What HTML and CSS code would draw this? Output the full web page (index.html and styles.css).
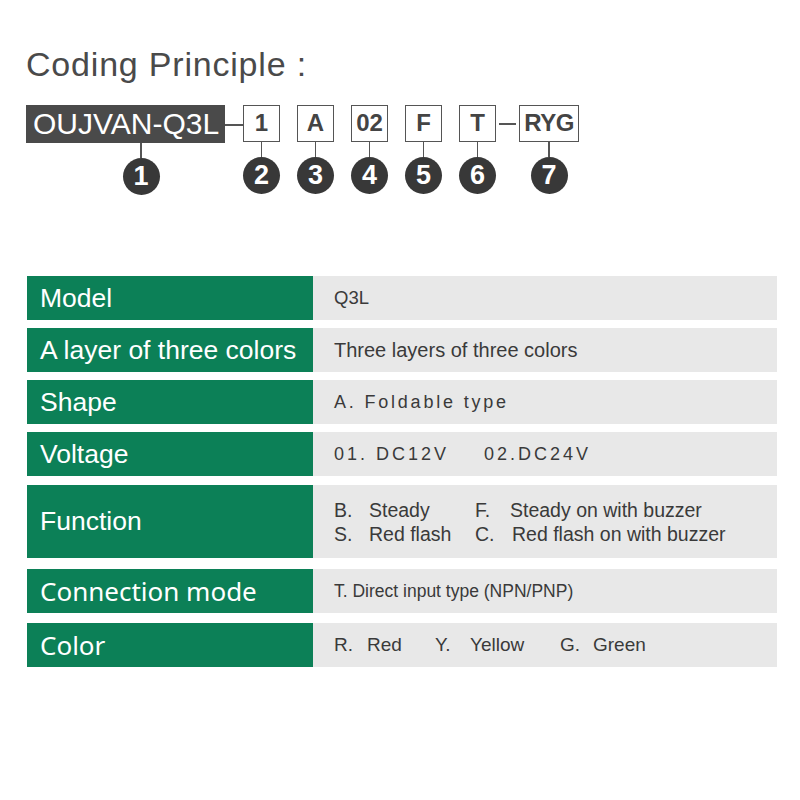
FILE: index.html
```html
<!DOCTYPE html>
<html>
<head>
<meta charset="utf-8">
<link rel="stylesheet" href="styles.css">
</head>
<body>
<div class="page">
  <h1 class="title">Coding Principle :</h1>

  <div class="code">
    <div class="seg seg-main">
      <div class="mainbox">OUJVAN-Q3L</div>
      <div class="mark mark-shift"><div class="stem"></div><div class="num">1</div></div>
    </div>
    <div class="link"></div>
    <div class="seg">
      <div class="box">1</div>
      <div class="mark"><div class="stem"></div><div class="num">2</div></div>
    </div>
    <div class="seg gap">
      <div class="box">A</div>
      <div class="mark"><div class="stem"></div><div class="num">3</div></div>
    </div>
    <div class="seg gap">
      <div class="box">02</div>
      <div class="mark"><div class="stem"></div><div class="num">4</div></div>
    </div>
    <div class="seg gap">
      <div class="box">F</div>
      <div class="mark"><div class="stem"></div><div class="num">5</div></div>
    </div>
    <div class="seg gap">
      <div class="box">T</div>
      <div class="mark"><div class="stem"></div><div class="num">6</div></div>
    </div>
    <div class="dash"></div>
    <div class="seg">
      <div class="box box-wide">RYG</div>
      <div class="mark"><div class="stem"></div><div class="num">7</div></div>
    </div>
  </div>

  <div class="table">
    <div class="row">
      <div class="label">Model</div>
      <div class="value">Q3L</div>
    </div>
    <div class="row">
      <div class="label">A layer of three colors</div>
      <div class="value v-wide">Three layers of three colors</div>
    </div>
    <div class="row">
      <div class="label">Shape</div>
      <div class="value spaced">A. Foldable type</div>
    </div>
    <div class="row">
      <div class="label">Voltage</div>
      <div class="value spaced volt-row"><span class="volt">01. DC12V</span><span>02.DC24V</span></div>
    </div>
    <div class="row row-tall">
      <div class="label">Function</div>
      <div class="value">
        <div class="fn-grid">
          <div><span class="key">B.</span>Steady</div>
          <div><span class="key">F.</span>Steady on with buzzer</div>
          <div><span class="key">S.</span>Red flash</div>
          <div><span class="key key-c">C.</span>Red flash on with buzzer</div>
        </div>
      </div>
    </div>
    <div class="row row-after-tall">
      <div class="label label-noto">Connection mode</div>
      <div class="value small">T. Direct input type (NPN/PNP)</div>
    </div>
    <div class="row row-last">
      <div class="label label-noto">Color</div>
      <div class="value">
        <span class="color-item c1"><span class="ckey">R.</span>Red</span>
        <span class="color-item c2"><span class="ckey">Y.</span>Yellow</span>
        <span class="color-item"><span class="ckey">G.</span>Green</span>
      </div>
    </div>
  </div>
</div>
</body>
</html>
```

FILE: styles.css
```css
* { box-sizing: border-box; }
html, body { margin: 0; padding: 0; background: #ffffff; }
body { font-family: "Liberation Sans", Arial, sans-serif; }

.page { width: 800px; height: 800px; padding: 44px 0 0 26px; }

.title {
  margin: 0;
  font-weight: normal;
  font-size: 34px;
  line-height: 40px;
  letter-spacing: 0.8px;
  color: #4a4a4a;
}

/* coding diagram */
.code {
  display: flex;
  align-items: flex-start;
  margin-top: 21px;
}
.seg {
  display: flex;
  flex-direction: column;
  align-items: center;
}
.seg.gap { margin-left: 17px; }
.mainbox {
  width: 199px;
  height: 38px;
  background: #4a4a4a;
  color: #ffffff;
  font-size: 30px;
  line-height: 38px;
  padding-left: 7px;
  white-space: nowrap;
}
.box {
  width: 37px;
  height: 37px;
  border: 1.5px solid #555555;
  color: #444444;
  font-weight: bold;
  font-size: 24px;
  line-height: 34px;
  text-align: center;
}
.box-wide { width: 60px; letter-spacing: -0.5px; }
.link {
  width: 18px;
  height: 1.5px;
  background: #555555;
  margin-top: 19px;
}
.dash {
  width: 17px;
  height: 1.5px;
  background: #555555;
  margin: 18px 3px 0 3px;
}
.mark {
  display: flex;
  flex-direction: column;
  align-items: center;
}
.mark-shift { margin-left: 31px; }
.stem {
  width: 1.5px;
  height: 15px;
  background: #555555;
}
.num {
  width: 37px;
  height: 37px;
  border-radius: 50%;
  background: #383838;
  color: #ffffff;
  font-weight: bold;
  font-size: 27px;
  line-height: 37px;
  text-align: center;
}

/* table */
.table {
  width: 750px;
  margin: 81px 0 0 1px;
  display: flex;
  flex-direction: column;
  gap: 8px;
}
.row {
  display: flex;
  height: 44px;
}
.row-tall { height: 73px; margin-top: 1px; }
.row-after-tall { margin-top: 3px; }
.row-last { margin-top: 2px; }
.label {
  width: 286px;
  flex: none;
  background: #0c8057;
  color: #ffffff;
  font-size: 26.5px;
  padding-left: 13px;
  display: flex;
  align-items: center;
  white-space: nowrap;
}
.label-noto { font-family: "Noto Sans", sans-serif; font-size: 26px; }
.value {
  flex: 1;
  background: #e8e8e8;
  color: #3a3a3a;
  font-size: 18.5px;
  padding-left: 21px;
  display: flex;
  align-items: center;
  white-space: nowrap;
}
.v-wide { font-size: 20px; }
.spaced { font-size: 18px; letter-spacing: 2.8px; }
.volt-row { letter-spacing: 3px; }
.volt { margin-right: 35px; }
.small { font-size: 17.5px; }

.fn-grid {
  display: grid;
  grid-template-columns: 141px auto;
  row-gap: 0;
  font-size: 19.5px;
  line-height: 24px;
}
.key { display: inline-block; width: 35px; }
.key-c { width: 37px; }

.color-item { font-size: 19px; }
.ckey { display: inline-block; width: 33px; }
.c1 { width: 101px; display: inline-block; }
.c2 { width: 125px; display: inline-block; }
.c2 .ckey { width: 35px; }
```
